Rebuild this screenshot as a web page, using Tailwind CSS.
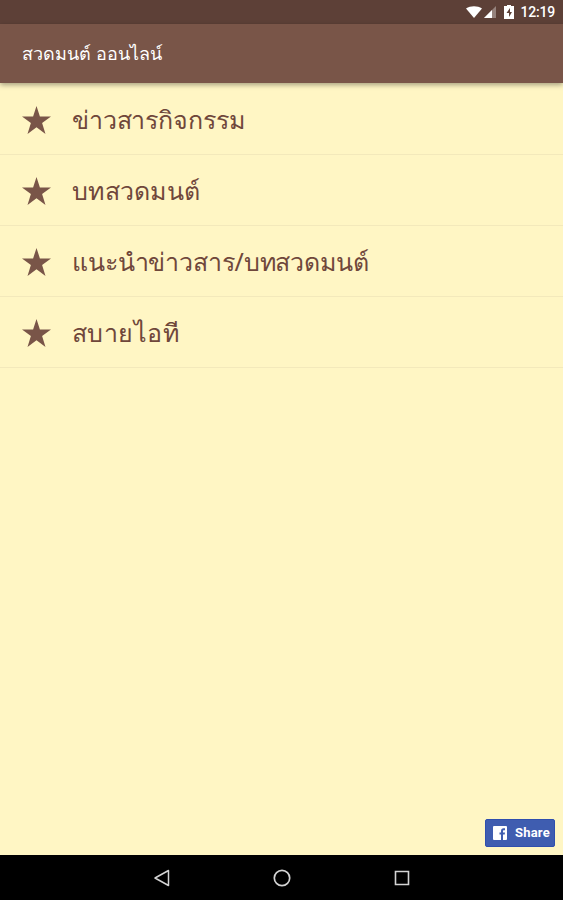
<!DOCTYPE html>
<html lang="th">
<head>
    <meta charset="UTF-8">
    <meta name="viewport" content="width=device-width, initial-scale=1.0">
    <title>สวดมนต์ ออนไลน์</title>
    <script src="https://cdn.jsdelivr.net/npm/@tailwindcss/browser@4"></script>
</head>
<body class="font-['Noto_Sans',sans-serif]">
    <div class="h-screen flex flex-col bg-[#fff6c4] text-[#795548] overflow-hidden">
        <!-- Status bar -->
        <div class="h-6 shrink-0 bg-[#5d4037] flex items-center justify-end pr-2 text-white">
            <svg class="w-4 h-3 mr-0.5" viewBox="0 0 16 12" fill="currentColor"><path d="M0 2.5C4.500-.5 11.500-.5 16 2.500L8 12z"/></svg>
            <svg class="w-3 h-3 mr-2" viewBox="0 0 12 12"><path d="M12 0v12H0z" fill="#fff" fill-opacity=".35"/><path d="M8 4v8H0z" fill="#fff"/></svg>
            <svg class="w-2.5 h-3.5 mr-1.5" viewBox="0 0 10 14"><path d="M3 0h4v1h3V14H0V1h3z" fill="#fff"/><path d="M6 3L2.500 8H5v4l3-5H6z" fill="#5d4037"/></svg>
            <span class="font-[Roboto] font-medium text-sm tracking-[-0.2px]">12:19</span>
        </div>

        <!-- App bar -->
        <div class="relative h-[59px] shrink-0 bg-[#795548] flex items-center pl-[22px] pb-0.5 text-white shadow-[0_2px_5px_rgba(0,0,0,0.35)]">
            <h1 class="text-lg">สวดมนต์ ออนไลน์</h1>
        </div>

        <!-- Menu -->
        <ul class="flex-1 pt-[1px] text-[25px] text-[#6f473b]">
            <li class="h-[71px] flex items-center pt-0.5 pl-[22px] border-b border-[#f3e9bb]">
                <svg class="w-[29px] h-7 mr-[21px]" viewBox="0 0 29 28" fill="#795548"><path d="M14.500 0L17.900 10.400H29L20.100 17L23.500 28L14.500 21.300L5.500 28L8.900 17L0 10.400H11.100z"/></svg>
                <span class="tracking-[-0.13px]">ข่าวสารกิจกรรม</span>
            </li>
            <li class="h-[71px] flex items-center pt-0.5 pl-[22px] border-b border-[#f3e9bb]">
                <svg class="w-[29px] h-7 mr-[21px]" viewBox="0 0 29 28" fill="#795548"><path d="M14.500 0L17.900 10.400H29L20.100 17L23.500 28L14.500 21.300L5.500 28L8.900 17L0 10.400H11.100z"/></svg>
                <span class="tracking-[0.3px]">บทสวดมนต์</span>
            </li>
            <li class="h-[71px] flex items-center pt-0.5 pl-[22px] border-b border-[#f3e9bb]">
                <svg class="w-[29px] h-7 mr-[21px]" viewBox="0 0 29 28" fill="#795548"><path d="M14.500 0L17.900 10.400H29L20.100 17L23.500 28L14.500 21.300L5.500 28L8.900 17L0 10.400H11.100z"/></svg>
                <span class="tracking-[-0.15px]">แนะนำข่าวสาร/บทสวดมนต์</span>
            </li>
            <li class="h-[71px] flex items-center pt-0.5 pl-[22px] border-b border-[#f3e9bb]">
                <svg class="w-[29px] h-7 mr-[21px]" viewBox="0 0 29 28" fill="#795548"><path d="M14.500 0L17.900 10.400H29L20.100 17L23.500 28L14.500 21.300L5.500 28L8.900 17L0 10.400H11.100z"/></svg>
                <span class="tracking-[0.45px]">สบายไอที</span>
            </li>
        </ul>

        <!-- Share -->
        <div class="flex justify-end pr-2 pb-2">
            <button class="w-[70px] h-7 bg-[#3f5db0] border border-[#2f4fae] rounded-xs flex items-center pl-[7px] text-white">
                <svg class="w-3.5 h-3.5 mr-2" viewBox="0 0 14 14"><rect width="14" height="14" rx="1" fill="#fff"/><path d="M8 14V8.500H6.500v-2H8V5c0-2 1-2.800 2.500-2.800h1.500v2h-1c-.8 0-1 .3-1 1v1.300h2l-.3 2H10V14z" fill="#3f5db0"/></svg>
                <span class="font-[Roboto] font-bold text-[13px] tracking-[0.2px]">Share</span>
            </button>
        </div>

        <!-- Navigation bar -->
        <div class="h-[45px] shrink-0 bg-black flex items-center justify-center gap-[102px] text-[#d4d4d4]">
            <svg class="w-[18px] h-[18px]" viewBox="0 0 18 18" fill="none" stroke="currentColor" stroke-width="1.500" stroke-linejoin="round"><path d="M15.500 1.500v15L2 9z"/></svg>
            <svg class="w-[18px] h-[18px]" viewBox="0 0 18 18" fill="none" stroke="currentColor" stroke-width="1.700"><circle cx="9" cy="9" r="7.700"/></svg>
            <svg class="w-[18px] h-[18px]" viewBox="0 0 18 18" fill="none" stroke="currentColor" stroke-width="1.600"><path d="M2.500 2.500h13v13h-13z"/></svg>
        </div>
    </div>
</body>
</html>
